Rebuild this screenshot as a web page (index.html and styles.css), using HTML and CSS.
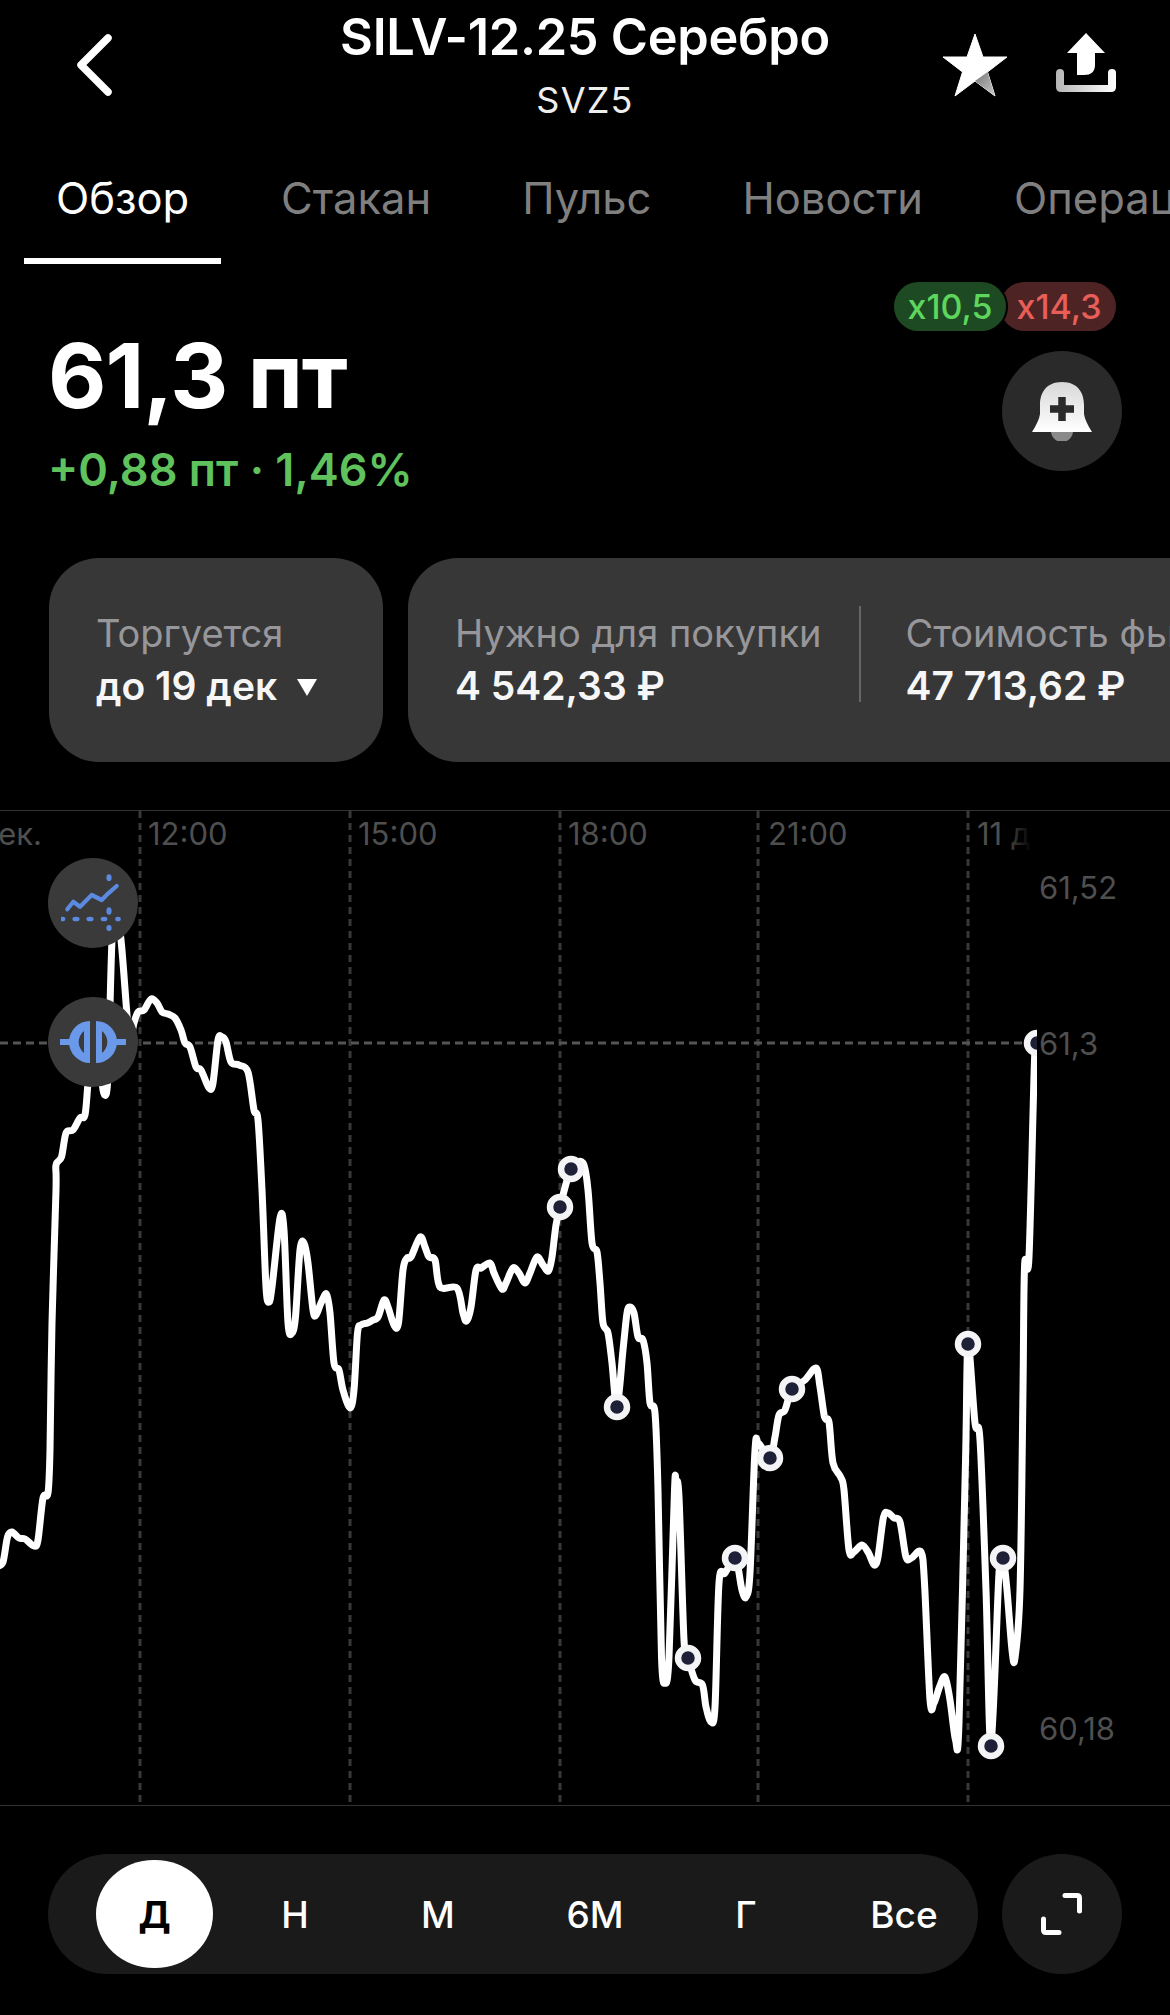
FILE: index.html
```html
<!DOCTYPE html>
<html lang="ru">
<head>
<meta charset="utf-8">
<title>SILV-12.25 Серебро</title>
<link rel="stylesheet" href="styles.css">
</head>
<body>
<div class="screen">
  <header class="topbar">
    <div class="topbar-left">
      <svg class="icon-back" width="40" height="66" viewBox="0 0 40 66"><path d="M33 6 L6 33 L33 60" fill="none" stroke="#fff" stroke-width="7.5" stroke-linecap="round" stroke-linejoin="round"/></svg>
    </div>
    <div class="topbar-title">
      <div class="title">SILV-12.25 Серебро</div>
      <div class="ticker">SVZ5</div>
    </div>
    <div class="topbar-right">
      <svg class="icon-star" width="66" height="64" viewBox="0 0 66 64">
        <defs><linearGradient id="starShade" x1="0" y1="0" x2="1" y2="1"><stop offset="0" stop-color="#777"/><stop offset="1" stop-color="#c9c9c9"/></linearGradient></defs>
        <path d="M33 1 L41 24 L65 24 L45.5 39 L53 63 L33 48 L13 63 L20.5 39 L1 24 L25 24 Z" fill="#fff" stroke="#fff" stroke-width="1" stroke-linejoin="round"/>
        <path d="M45.5 39 L53 63 L33 48 Z" fill="url(#starShade)"/>
      </svg>
      <svg class="icon-share" width="60" height="60" viewBox="0 0 60 60">
        <defs><linearGradient id="trayShade" x1="0" y1="0" x2="1" y2="0"><stop offset="0" stop-color="#b5b5b5"/><stop offset="1" stop-color="#fff"/></linearGradient></defs>
        <path d="M30 0 L49 20 L39 20 L39 32 Q39 42 28 42 L21 42 L21 20 L11 20 Z" fill="#fff"/>
        <path d="M4 36 Q8 36 8 40 L8 52 L52 52 L52 40 Q52 36 56 36 Q60 36 60 40 L60 54 Q60 59 55 59 L5 59 Q0 59 0 54 L0 40 Q0 36 4 36 Z" fill="url(#trayShade)"/>
      </svg>
    </div>
  </header>

  <nav class="tabs">
    <div class="tab tab-active">Обзор</div>
    <div class="tab">Стакан</div>
    <div class="tab">Пульс</div>
    <div class="tab">Новости</div>
    <div class="tab">Операции</div>
  </nav>

  <section class="quote">
    <div class="quote-main">
      <div class="price">61,3 пт</div>
      <div class="change">+0,88 пт · 1,46%</div>
    </div>
    <div class="quote-side">
      <div class="badges">
        <span class="badge badge-green">x10,5</span>
        <span class="badge badge-red">x14,3</span>
      </div>
      <button class="round-btn round-btn-alert" type="button" aria-label="Уведомление">
        <svg width="60" height="60" viewBox="0 0 60 60">
          <defs><linearGradient id="bellShade" x1="0" y1="0" x2="0" y2="1"><stop offset="0" stop-color="#d8d8d8"/><stop offset="1" stop-color="#fff"/></linearGradient></defs>
          <circle cx="30" cy="50" r="11" fill="#8a8a8a"/>
          <path d="M30 1 C14 1 8 12 8 24 L8 33 Q7 40 0 51 L60 51 Q53 40 52 33 L52 24 C52 12 46 1 30 1 Z" fill="url(#bellShade)"/>
          <path d="M30 16 V40 M18 28 H42" stroke="#2a2a2a" stroke-width="7.5" fill="none"/>
        </svg>
      </button>
    </div>
  </section>

  <section class="cards">
    <div class="card card-trade">
      <div class="card-cell">
        <div class="card-label">Торгуется</div>
        <div class="card-value">до 19 дек <span class="caret"></span></div>
      </div>
    </div>
    <div class="card card-info">
      <div class="card-cell">
        <div class="card-label">Нужно для покупки</div>
        <div class="card-value">4 542,33 ₽</div>
      </div>
      <div class="card-divider"></div>
      <div class="card-cell">
        <div class="card-label">Стоимость фьючерса</div>
        <div class="card-value">47 713,62 ₽</div>
      </div>
    </div>
  </section>

  <section class="chart">
    <svg class="chart-svg" width="1170" height="996" viewBox="0 810 1170 996">
      <defs>
        <linearGradient id="labelFade" gradientUnits="userSpaceOnUse" x1="1005" y1="0" x2="1032" y2="0"><stop offset="0" stop-color="#4f4f4f"/><stop offset="1" stop-color="#4f4f4f" stop-opacity="0"/></linearGradient>
        <clipPath id="lineClip"><rect x="0" y="810" width="1037" height="996"/></clipPath>
        <clipPath id="fadeClip"><rect x="970" y="810" width="62" height="50"/></clipPath>
      </defs>
      <line class="rule" x1="0" y1="810.5" x2="1170" y2="810.5"/>
      <line class="rule" x1="0" y1="1805.5" x2="1170" y2="1805.5"/>
      <path class="grid-v" d="M140 811V1805M350 811V1805M560 811V1805M758 811V1805M968 811V1805"/>
      <line class="grid-h" x1="0" y1="1043" x2="1037" y2="1043"/>
      <text class="axis" x="42" y="845" text-anchor="end">дек.</text>
      <text class="axis" x="148" y="845">12:00</text>
      <text class="axis" x="358" y="845">15:00</text>
      <text class="axis" x="568" y="845">18:00</text>
      <text class="axis" x="768" y="845">21:00</text>
      <text class="axis axis-fade" x="977" y="845" clip-path="url(#fadeClip)">11 дек.</text>
      <text class="axis" x="1039" y="899">61,52</text>
      <text class="axis" x="1039" y="1055">61,3</text>
      <text class="axis" x="1039" y="1740">60,18</text>
      <g clip-path="url(#lineClip)" id="plot">
        <path id="priceLine" class="price-line" d=""/>
        <circle class="dot" cx="560" cy="1207" r="10"/>
        <circle class="dot" cx="571" cy="1169" r="10"/>
        <circle class="dot" cx="617" cy="1407" r="10"/>
        <circle class="dot" cx="688" cy="1658" r="10"/>
        <circle class="dot" cx="735" cy="1558" r="10"/>
        <circle class="dot" cx="770" cy="1458" r="10"/>
        <circle class="dot" cx="792" cy="1389" r="10"/>
        <circle class="dot" cx="968" cy="1344" r="10"/>
        <circle class="dot" cx="991" cy="1746" r="10"/>
        <circle class="dot" cx="1003" cy="1558" r="10"/>
        <circle class="dot" cx="1037" cy="1043" r="10"/>
      </g>
    </svg>
    <button class="chart-btn chart-btn-lines" type="button" aria-label="Индикаторы">
      <svg width="64" height="64" viewBox="0 0 64 64">
        <path d="M6.3 38.3 L12.3 30.7 L19 35.7 L30.7 24 L40.7 29 L47.3 22.3 L55.7 15" fill="none" stroke="#5b8ae0" stroke-width="4.2" stroke-linecap="round" stroke-linejoin="round"/>
        <g fill="#5b8ae0">
          <ellipse cx="48" cy="6.7" rx="2.6" ry="3.4"/>
          <ellipse cx="48" cy="40" rx="2.6" ry="3.8"/>
          <ellipse cx="48" cy="57" rx="2.6" ry="3"/>
          <ellipse cx="1.5" cy="48" rx="2.8" ry="2.3"/>
          <ellipse cx="15" cy="48" rx="3.6" ry="2.3"/>
          <ellipse cx="29" cy="48" rx="3.6" ry="2.3"/>
          <ellipse cx="43" cy="48" rx="3.4" ry="2.3"/>
          <ellipse cx="57" cy="48" rx="2.8" ry="2.3"/>
        </g>
      </svg>
    </button>
    <button class="chart-btn chart-btn-candle" type="button" aria-label="Вид графика">
      <svg width="70" height="50" viewBox="-35 -25 70 50">
        <g fill="#6b99ea" fill-rule="evenodd">
          <path d="M-3 -21 A21 21 0 0 0 -3 21 Z M-9 -11 A14 14 0 0 0 -9 11 Z"/>
          <path d="M3 -21 A21 21 0 0 1 3 21 Z M9 -11 A14 14 0 0 1 9 11 Z"/>
          <rect x="-33" y="-3" width="14" height="6"/>
          <rect x="19" y="-3" width="14" height="6"/>
        </g>
      </svg>
    </button>
  </section>

  <footer class="periods-row">
    <div class="periods">
      <div class="period period-active">Д</div>
      <div class="period">Н</div>
      <div class="period">М</div>
      <div class="period">6М</div>
      <div class="period">Г</div>
      <div class="period">Все</div>
    </div>
    <button class="round-btn round-btn-expand" type="button" aria-label="Развернуть">
      <svg width="46" height="46" viewBox="0 0 46 46"><path d="M26 4.5 H38 Q40.5 4.5 40.5 7 V20 M4.5 28 V39 Q4.5 41.5 7 41.5 H20" fill="none" stroke="#fff" stroke-width="5" stroke-linecap="round"/></svg>
    </button>
  </footer>
</div>
<script src="chart.js"></script>
</body>
</html>
```

FILE: styles.css
```css
* { box-sizing: border-box; }
html, body { margin: 0; padding: 0; background: #000; }
body { font-family: Inter, "Noto Sans", "Liberation Sans", sans-serif; color: #fff; }
button { border: 0; padding: 0; font: inherit; color: inherit; }

.screen { position: relative; width: 1170px; height: 2015px; overflow: hidden; background: #000; }

.topbar { display: grid; grid-template-columns: 1fr auto 1fr; height: 134px; align-items: start; }
.topbar-left { padding: 32px 0 0 75px; }
.icon-back { display: block; }
.topbar-title { text-align: center; padding-top: 9px; }
.title { font-size: 50.5px; font-weight: 600; line-height: 56px; letter-spacing: -0.3px; white-space: nowrap; }
.ticker { font-size: 36px; font-weight: 400; line-height: 40px; margin-top: 15px; color: #eee; letter-spacing: 1.2px; }
.topbar-right { display: flex; justify-content: flex-end; gap: 48px; padding: 33px 54px 0 0; }
.icon-star { display: block; }
.icon-share { display: block; }

.tabs { display: flex; gap: 29px; height: 130px; padding-left: 24px; white-space: nowrap; }
.tab { height: 130px; padding: 39px 31px 0; font-size: 43.5px; line-height: 50px; color: #7f7f7f; flex: none; }
.tab-active { width: 197px; padding: 39px 0 0; text-align: center; color: #fff; border-bottom: 6px solid #fff; }

.quote { display: flex; justify-content: space-between; height: 294px; padding: 18px 48px 0 48px; }
.quote-main { padding-top: 41px; }
.price { font-size: 90px; font-weight: 700; line-height: 106px; letter-spacing: -1px; white-space: nowrap; }
.change { font-size: 45px; font-weight: 600; line-height: 50px; margin-top: 16px; color: #5fc25c; white-space: nowrap; }
.quote-side { display: flex; flex-direction: column; align-items: flex-end; }
.badges { display: flex; margin-right: 6px; }
.badge { display: block; height: 49px; border-radius: 25px; font-size: 34px; font-weight: 500; line-height: 49px; text-align: center; }
.badge-green { position: relative; z-index: 1; width: 112px; background: #1d4a22; color: #5ed65e; box-shadow: 0 0 0 2px #000; }
.badge-red { width: 116px; margin-left: -6px; padding-left: 2px; background: #4e2323; color: #e85e58; }
.round-btn { display: flex; align-items: center; justify-content: center; width: 120px; height: 120px; border-radius: 50%; flex: none; }
.round-btn-alert { background: #2a2a2a; margin-top: 20px; }
.round-btn-expand { background: #1a1a1a; }

.cards { display: flex; gap: 25px; height: 204px; padding-left: 49px; }
.card { display: flex; align-items: center; height: 204px; padding-bottom: 2px; background: #373737; border-radius: 50px; flex: none; }
.card-trade { width: 334px; padding-left: 47px; }
.card-info { width: 900px; padding-left: 47px; }
.card-label { font-size: 38px; line-height: 44px; color: #97979b; white-space: nowrap; }
.card-value { display: flex; align-items: center; gap: 20px; margin-top: 9px; font-size: 39px; font-weight: 600; line-height: 44px; color: #f6f6f6; white-space: nowrap; }
.card-divider { width: 2px; height: 96px; margin: 0 44px 10px 38px; background: #666; flex: none; }
.caret { width: 0; height: 0; margin-top: 4px; border-left: 10px solid transparent; border-right: 10px solid transparent; border-top: 17px solid #fff; }

.chart { position: relative; height: 1044px; margin-top: 48px; }
.chart-svg { position: absolute; left: 0; top: 0; display: block; }
.rule { stroke: #333; stroke-width: 1; }
.grid-v { stroke: #383838; stroke-width: 3; stroke-dasharray: 7 5; fill: none; }
.grid-h { stroke: #555; stroke-width: 3; stroke-dasharray: 8 5; }
.axis { font-family: Inter, "Noto Sans", sans-serif; font-size: 31px; fill: #4f4f4f; }
.axis-fade { fill: url(#labelFade); }
.price-line { fill: none; stroke: #fff; stroke-width: 7; stroke-linejoin: round; stroke-linecap: round; }
.dot { fill: #1d2036; stroke: #f4f4f6; stroke-width: 6.5; }
.chart-btn { position: absolute; left: 48px; display: flex; align-items: center; justify-content: center; width: 90px; height: 90px; border-radius: 50%; background: #3a3a3a; }
.chart-btn-lines { top: 48px; }
.chart-btn-candle { top: 187px; }

.periods-row { display: flex; gap: 24px; height: 120px; padding-left: 48px; }
.periods { position: relative; display: flex; align-items: center; width: 930px; height: 120px; border-radius: 60px; background: #1a1a1a; }
.period { position: absolute; top: 6px; display: flex; align-items: center; justify-content: center; width: 116px; height: 108px; font-size: 37px; font-weight: 500; color: #fff; }
.period-active { left: 48px; width: 117px; border-radius: 58px / 54px; background: #fff; color: #000; font-weight: 700; }
.period:nth-child(2) { left: 189px; }
.period:nth-child(3) { left: 332px; }
.period:nth-child(4) { left: 489px; }
.period:nth-child(5) { left: 640px; }
.period:nth-child(6) { left: 798px; }
```

FILE: chart.js
```js
var pts = [
[-2,1566],[3,1562],[7.5,1537],[12,1532],[19,1538],[25,1539],[34,1546],[38,1540],[43,1498],[48,1493],[50,1450],[52,1323],[56,1190],[56,1165],[61.5,1157],[66,1133],[73,1130],[80,1118],[85,1115],[88,1083],[92,1045],[97,1040],[101,1075],[104.5,1095],[108,1075],[112,940],[116,915],[121,940],[127,1015],[130,1040],[134,1023],[138,1012],[144,1010],[151,999],[157,1003],[162,1012],[168,1014],[175,1018],[181,1030],[185,1043],[190,1047],[196,1067],[201,1070],[209,1088],[213,1083],[218,1040],[222,1037],[226,1042],[231,1062],[239,1065],[248,1072],[254,1110],[258,1120],[262,1190],[266,1287],[269,1302],[272,1287],[280,1218],[284,1230],[288,1323],[292,1333],[295.5,1317],[300,1250],[304,1243],[308,1263],[313,1310],[316,1315],[321,1303],[326.5,1294],[330,1313],[334,1363],[339,1370],[343,1390],[350,1408],[354,1390],[357.5,1333],[361,1325],[367.5,1323],[373,1320],[378,1317],[384,1300],[388,1307],[394,1325],[398.5,1323],[403,1270],[407,1258],[411,1257],[420,1237],[425,1247],[429,1257],[435,1260],[440,1287],[457,1288],[463,1313],[466.5,1321],[471,1307],[476,1270],[481,1268],[490,1263],[494,1273],[502,1289],[506,1283],[513,1268],[519,1273],[525,1283],[530,1273],[537,1257],[543,1265],[548.5,1271],[552,1257],[556,1225],[560,1207],[571,1169],[583,1163],[588,1190],[592,1243],[597,1252],[600,1283],[603,1323],[608,1333],[612,1363],[617,1407],[623,1350],[627,1313],[630,1307],[634,1313],[638,1337],[643,1340],[647,1363],[650,1403],[655,1413],[658,1490],[661.5,1657],[665,1683],[669,1657],[674.5,1490],[676,1483],[679,1497],[684,1640],[688,1658],[695,1680],[702.5,1685],[706,1707],[711,1722],[715,1707],[719,1583],[725,1573],[735,1558],[738,1567],[742,1590],[746,1597],[750,1573],[755,1450],[758.5,1443],[770,1458],[775,1437],[779,1415],[785,1410],[792,1389],[805,1380],[816,1368],[820,1387],[824.5,1417],[829,1422],[833,1463],[840.6,1477],[844,1490],[849,1550],[854,1552],[862,1545],[868.6,1553],[874,1565],[878,1557],[883.5,1517],[888,1513],[894,1518],[900,1522],[906,1557],[911.5,1558],[921,1552],[924.5,1583],[930,1700],[934,1703],[939.5,1687],[945,1677],[950,1700],[955.5,1740],[959,1723],[965.6,1457],[968,1344],[975,1423],[980,1440],[986,1590],[991,1746],[999,1573],[1003,1558],[1007,1590],[1012,1650],[1015,1658],[1020,1590],[1023,1390],[1024.6,1265],[1029,1257],[1034.6,1057],[1037,1043]
];
var d = "M" + pts[0][0] + " " + pts[0][1];
for (var i = 0; i < pts.length - 1; i++) {
  var p0 = pts[Math.max(i - 1, 0)], p1 = pts[i], p2 = pts[i + 1], p3 = pts[Math.min(i + 2, pts.length - 1)];
  var k = 0.16;
  var c1x = p1[0] + (p2[0] - p0[0]) * k, c1y = p1[1] + (p2[1] - p0[1]) * k;
  var c2x = p2[0] - (p3[0] - p1[0]) * k, c2y = p2[1] - (p3[1] - p1[1]) * k;
  d += "C" + c1x.toFixed(1) + " " + c1y.toFixed(1) + " " + c2x.toFixed(1) + " " + c2y.toFixed(1) + " " + p2[0] + " " + p2[1];
}
document.getElementById("priceLine").setAttribute("d", d);
```
